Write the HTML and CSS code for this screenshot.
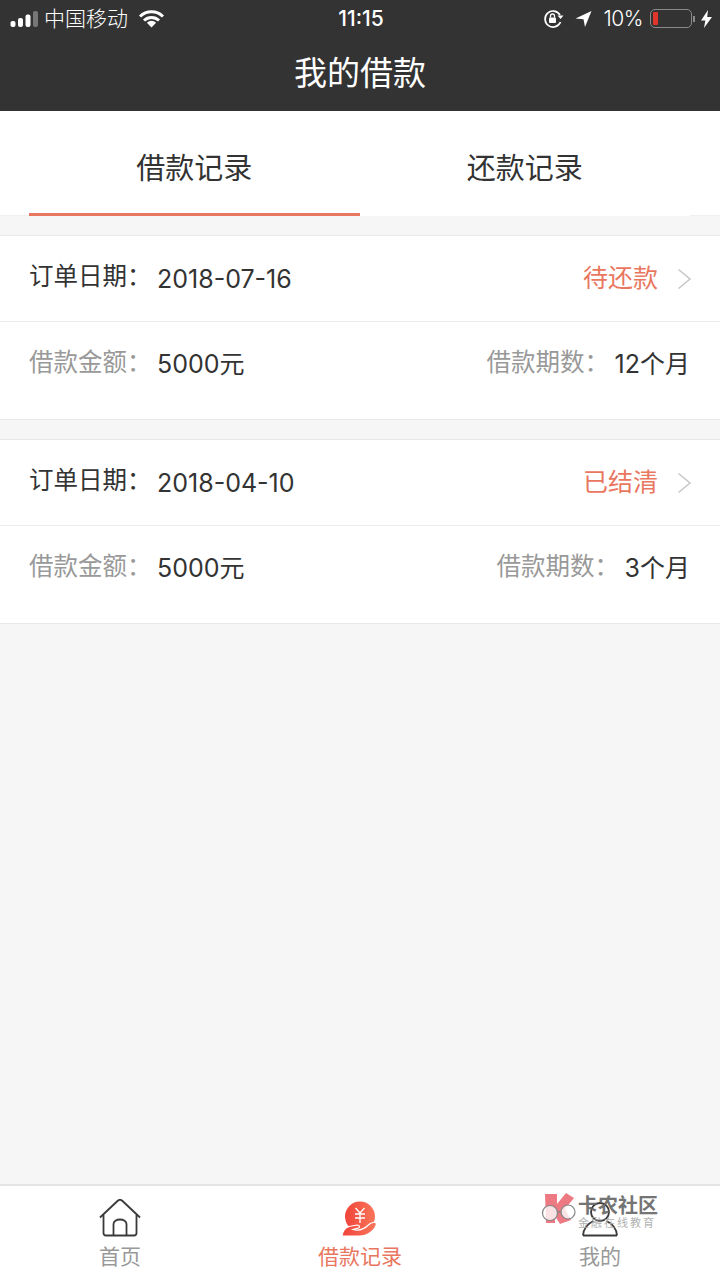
FILE: index.html
```html
<!DOCTYPE html>
<html lang="zh-CN">
<head>
    <meta charset="UTF-8">
    <meta name="viewport" content="width=device-width, initial-scale=1.0">
    <title>我的借款</title>
    <link rel="stylesheet" href="styles.css">
</head>
<body>
<div class="page">
    <header class="top">
        <div class="status">
            <div class="status-left">
                <svg class="signal" width="29" height="18" viewBox="0 0 29 18">
                    <rect x="0.5" y="11" width="5" height="6" rx="2" fill="#fff"/>
                    <rect x="8" y="8" width="5" height="9" rx="2" fill="#fff"/>
                    <rect x="15.5" y="4.5" width="5" height="12.5" rx="2" fill="#fff"/>
                    <rect x="23" y="1" width="5" height="16" rx="2" fill="#777"/>
                </svg>
                <span class="carrier">中国移动</span>
                <svg class="wifi" width="25" height="18" viewBox="0 0 25 18">
                    <path d="M1 6.5a16.5 16.5 0 0 1 23 0" fill="none" stroke="#fff" stroke-width="3"/>
                    <path d="M5 10.5a11 11 0 0 1 15 0" fill="none" stroke="#fff" stroke-width="3"/>
                    <path d="M12.5 17.5l-4.6-4.8a6.6 6.6 0 0 1 9.2 0z" fill="#fff"/>
                </svg>
            </div>
            <div class="status-time">11:15</div>
            <div class="status-right">
                <svg class="rotate-lock" width="21" height="20" viewBox="0 0 21 20">
                    <path d="M17 6A8 8 0 1 0 17.500 13" fill="none" stroke="#fff" stroke-width="1.700"/>
                    <path d="M14.500 6.500h6l-3 3.600z" fill="#fff"/>
                    <rect x="6" y="8.500" width="7" height="5.500" rx="1" fill="#fff"/>
                    <path d="M7.500 8.500V7a2 2 0 0 1 4 0v1.500" fill="none" stroke="#fff" stroke-width="1.300"/>
                </svg>
                <svg class="loc" width="17" height="18" viewBox="0 0 17 18">
                    <path d="M16.500 1L.5 8.500l8 .8L10 17z" fill="#fff"/>
                </svg>
                <span class="percent">10%</span>
                <div class="battery">
                    <div class="battery-body"><div class="battery-level"></div></div>
                    <div class="battery-cap"></div>
                </div>
                <svg class="bolt" width="11" height="18" viewBox="0 0 11 18">
                    <path d="M7 0L0 10.500h4.300L3 18l8-11H6.200z" fill="#fff"/>
                </svg>
            </div>
        </div>
        <h1 class="nav-title">我的借款</h1>
    </header>

    <nav class="tabs">
        <div class="tab tab-active">借款记录</div>
        <div class="tab">还款记录</div>
    </nav>

    <main class="list">
        <section class="card">
            <div class="row">
                <span class="label label-dark">订单日期：</span>
                <span class="value">2018-07-16</span>
                <span class="state">待还款</span>
                <svg class="arrow" width="15" height="22" viewBox="0 0 15 22"><path d="M1.500 1.500L13 11 1.500 20.500" fill="none" stroke="#c8c8c8" stroke-width="1.600"/></svg>
            </div>
            <div class="row row-info">
                <span class="label">借款金额：</span>
                <span class="value">5000元</span>
                <span class="label label-right">借款期数：</span>
                <span class="value">12个月</span>
            </div>
        </section>
        <section class="card">
            <div class="row">
                <span class="label label-dark">订单日期：</span>
                <span class="value">2018-04-10</span>
                <span class="state">已结清</span>
                <svg class="arrow" width="15" height="22" viewBox="0 0 15 22"><path d="M1.500 1.500L13 11 1.500 20.500" fill="none" stroke="#c8c8c8" stroke-width="1.600"/></svg>
            </div>
            <div class="row row-info">
                <span class="label">借款金额：</span>
                <span class="value">5000元</span>
                <span class="label label-right">借款期数：</span>
                <span class="value">3个月</span>
            </div>
        </section>
    </main>

    <footer class="tabbar">
        <div class="bar-item">
            <svg width="42" height="38" viewBox="0 0 42 38">
                <path d="M1 18.500L18.500 2a3.600 3.600 0 0 1 5 0L41 18.500" fill="none" stroke="#3a3a3a" stroke-width="1.800"/>
                <path d="M4.500 16v18a2.500 2.500 0 0 0 2.500 2.500h28a2.500 2.500 0 0 0 2.500-2.500V16" fill="none" stroke="#3a3a3a" stroke-width="1.800"/>
                <path d="M14.500 36.500V25a6.500 4.500 0 0 1 13 0v11.500" fill="none" stroke="#3a3a3a" stroke-width="1.800"/>
            </svg>
            <span>首页</span>
        </div>
        <div class="bar-item bar-item-active">
            <svg width="38" height="36" viewBox="0 0 38 36">
                <defs>
                    <linearGradient id="coin" x1="0" y1="0" x2="1" y2="0">
                        <stop offset="0" stop-color="#f0443a"/>
                        <stop offset="1" stop-color="#f9765a"/>
                    </linearGradient>
                </defs>
                <circle cx="19" cy="15.500" r="15" fill="url(#coin)"/>
                <path d="M14.500 7l4.500 5 4.500-5M19 12v10M14 13h10M14 17h10" fill="none" stroke="#fff" stroke-width="1.300"/>
                <path d="M1 35c.5-4 3-8 7-9.500l8-1.500c3 0 3.500 2.500 1 3.200l-5 1.300c5 1.500 11 0 16-5 2-2 6.500-3 7.500-1-1 6-8 12.500-17 12.500z" fill="url(#coin)" stroke="#fff" stroke-width="1.200"/>
            </svg>
            <span>借款记录</span>
        </div>
        <div class="bar-item">
            <svg width="38" height="37" viewBox="0 0 38 37">
                <circle cx="19" cy="12" r="9" fill="none" stroke="#3a3a3a" stroke-width="1.800"/>
                <path d="M2 35.500c.5-7 5-12 10.500-14.500M36 35.500c-.5-7-5-12-10.500-14.500M2 35.500h34" fill="none" stroke="#3a3a3a" stroke-width="1.800"/>
            </svg>
            <span>我的</span>
        </div>
        <div class="watermark">
            <svg width="40" height="38" viewBox="0 0 40 38">
                <path d="M5 4h12v10L26 3l8 5-9 11 6 11-11 4-5-8v7H6z" fill="#ec6b76"/>
                <circle cx="10" cy="23" r="7.500" fill="#fff" fill-opacity=".8" stroke="#777" stroke-width="1.200"/>
                <circle cx="28" cy="22" r="7" fill="#fff" fill-opacity=".8" stroke="#777" stroke-width="1.200"/>
                <path d="M17.500 22.500q2.500-1.500 3.500-.5" fill="none" stroke="#777" stroke-width="1.200"/>
            </svg>
            <div class="mark-text">
                <div class="mark-name">卡农社区</div>
                <div class="mark-sub">金融在线教育</div>
            </div>
        </div>
    </footer>
</div>
</body>
</html>
```

FILE: styles.css
```css
html, body {
    margin: 0;
    padding: 0;
    background-color: #f6f6f6;
}

body {
    font-family: "Inter", "Noto Sans CJK SC", sans-serif;
}

.page {
    display: flex;
    flex-direction: column;
    width: 720px;
    height: 1280px;
    overflow: hidden;
}

.top {
    height: 111px;
    background-color: #333333;
    color: white;
    flex-shrink: 0;
}

.status {
    display: grid;
    grid-template-columns: 1fr auto 1fr;
    align-items: center;
    height: 37px;
    padding: 0 8px 0 10px;
}

.status-left, .status-right {
    display: flex;
    align-items: center;
}

.status-left {
    gap: 5px;
}

.status-right {
    justify-content: flex-end;
}

.carrier {
    font-size: 21px;
    font-weight: 300;
    margin-right: 6px;
    padding-bottom: 4px;
}

.status-time {
    font-size: 21px;
    font-weight: 500;
}

.loc {
    margin: 0 12px 0 11px;
}

.percent {
    font-size: 21px;
    font-weight: 300;
    letter-spacing: -0.5px;
    margin-right: 7px;
}

.battery {
    display: flex;
    align-items: center;
    gap: 1px;
    margin-right: 6px;
}

.battery-body {
    width: 42px;
    height: 19px;
    border: 1.500px solid #8a8a8a;
    border-radius: 5px;
    padding: 2px;
    box-sizing: border-box;
}

.battery-level {
    width: 5px;
    height: 100%;
    background-color: #e0352b;
    border-radius: 1px;
}

.battery-cap {
    width: 2px;
    height: 6px;
    background-color: #8a8a8a;
}

.nav-title {
    margin: 0;
    text-align: center;
    font-size: 33px;
    font-weight: 400;
    line-height: 72px;
}

.tabs {
    display: flex;
    height: 105px;
    padding: 0 30px 0 29px;
    background-color: white;
    box-shadow: inset 0 -1px 0 #efefef;
    flex-shrink: 0;
}

.tab {
    flex: 1;
    display: flex;
    align-items: center;
    justify-content: center;
    font-size: 29px;
    color: #333333;
    background-color: white;
    box-sizing: border-box;
    padding-top: 5px;
}

.tab-active {
    box-shadow: inset 0 -3px 0 #e9775f;
}

.list {
    flex: 1;
    padding-top: 19px;
    display: flex;
    flex-direction: column;
    gap: 19px;
}

.card {
    background-color: white;
    border-top: 1px solid #e8e8e8;
    border-bottom: 1px solid #e8e8e8;
    height: 185px;
    box-sizing: border-box;
}

.row {
    display: flex;
    align-items: center;
    height: 85px;
    padding: 0 28px 0 29px;
    border-bottom: 1px solid #ececec;
}

.row-info {
    height: 82px;
    padding-right: 30px;
    border-bottom: none;
}

.label {
    font-size: 24.500px;
    color: #999999;
    width: 128px;
    white-space: nowrap;
    line-height: 1;
    padding-bottom: 4px;
}

.label-dark {
    color: #333333;
}

.label-right {
    margin-left: auto;
}

.row-info .label {
    padding-bottom: 2px;
}

.row-info .value {
    padding-bottom: 2px;
}

.value {
    font-size: 25px;
    color: #333333;
    font-weight: 400;
}

.state {
    margin-left: auto;
    font-size: 25px;
    color: #e9775f;
    margin-right: 19px;
    padding-bottom: 6px;
}

.arrow {
    display: block;
}

.tabbar {
    display: grid;
    grid-template-columns: repeat(3, 1fr);
    height: 96px;
    box-sizing: border-box;
    background-color: white;
    border-top: 2px solid #e4e4e4;
    flex-shrink: 0;
    position: relative;
}

.bar-item {
    display: flex;
    flex-direction: column;
    align-items: center;
    justify-content: flex-end;
    height: 85px;
    font-size: 21px;
    line-height: 28px;
    color: #999999;
}

.bar-item-active {
    color: #e9775f;
}

.bar-item svg {
    display: block;
    margin-bottom: 6px;
}

.watermark {
    position: absolute;
    left: 540px;
    top: 4px;
    display: flex;
    opacity: 0.9;
}

.mark-text {
    display: flex;
    flex-direction: column;
    margin-left: -2px;
    margin-top: 5px;
}

.mark-name {
    font-size: 20px;
    line-height: 22px;
    font-weight: 700;
    color: #666666;
}

.mark-sub {
    font-size: 11px;
    line-height: 12px;
    letter-spacing: 2px;
    color: #aaaaaa;
}
```
